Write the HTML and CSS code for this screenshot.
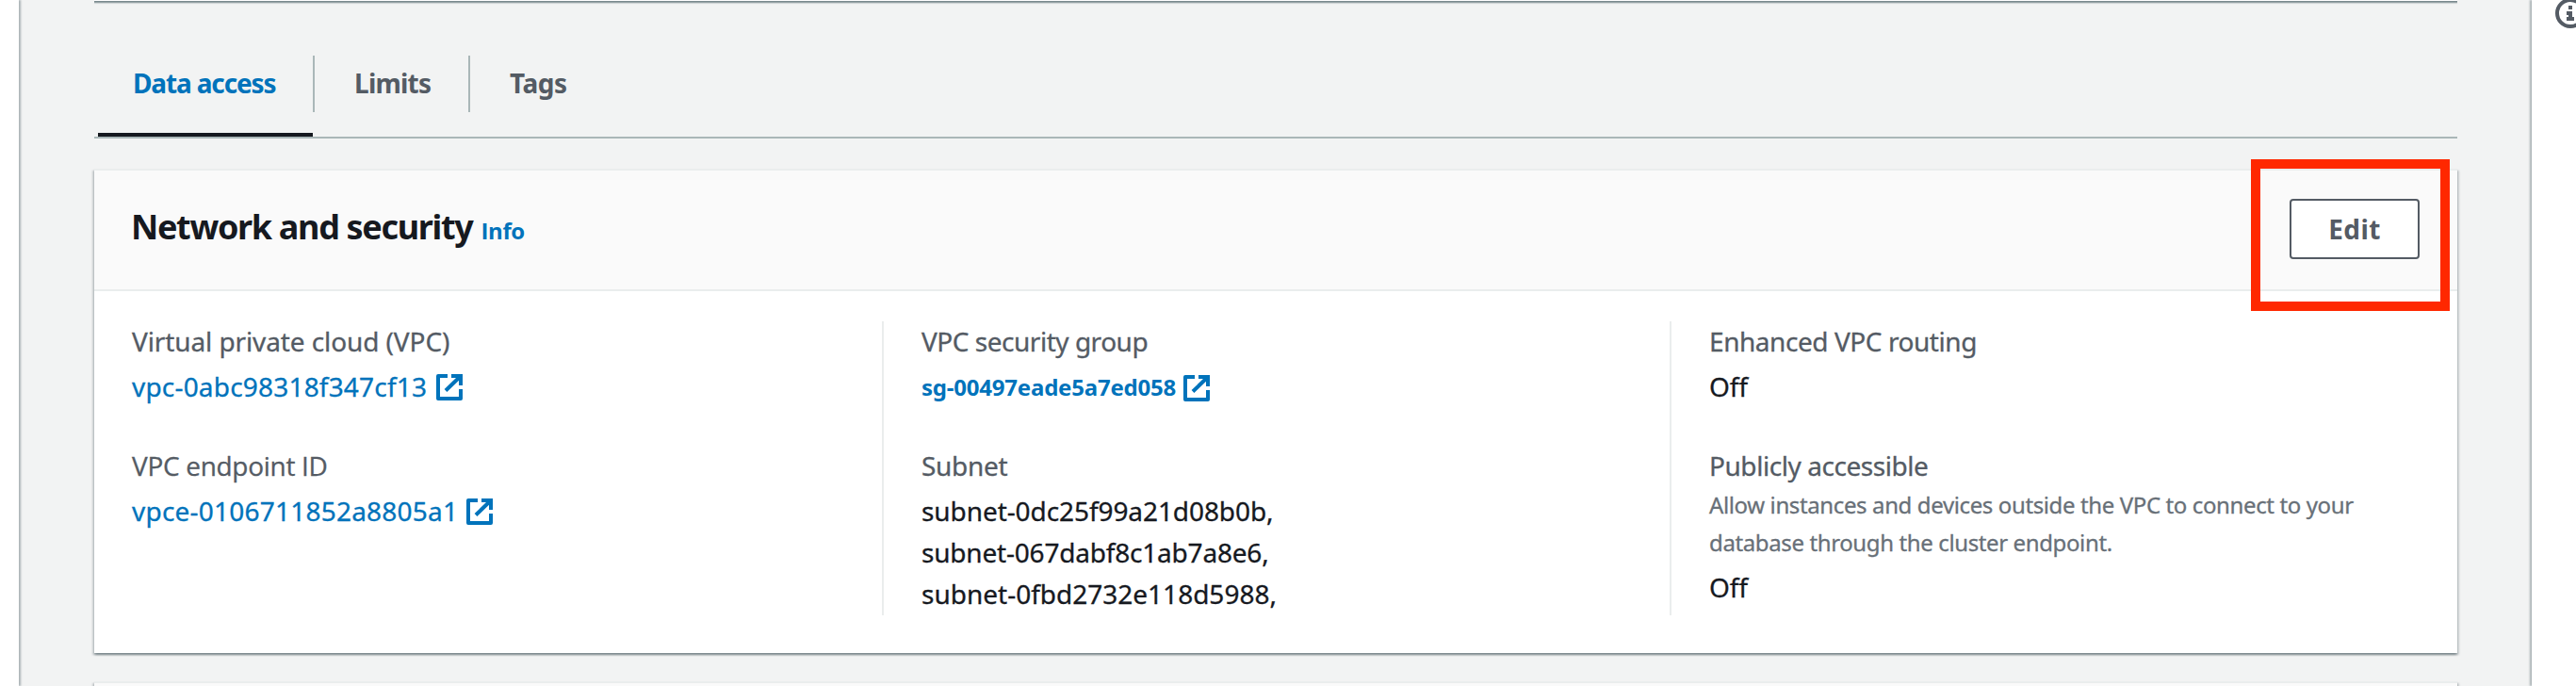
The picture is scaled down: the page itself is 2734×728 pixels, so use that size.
FILE: index.html
```
<!DOCTYPE html>
<html lang="en">
<head>
<meta charset="utf-8">
<title>Network and security</title>
<link rel="stylesheet" href="styles.css">
</head>
<body>
<svg class="defs" aria-hidden="true">
  <symbol id="external" viewBox="0 0 28 28">
    <path d="M12 2H2V26H26V16" fill="none" stroke="currentColor" stroke-width="4" stroke-linejoin="round"/>
    <path d="M16 2H26V12M25.500 2.500L10 17.500" fill="none" stroke="currentColor" stroke-width="4"/>
  </symbol>
</svg>
<div class="app">
  <aside class="nav"></aside>
  <main class="content">
    <section class="card card-prev"></section>
    <nav class="tabs">
      <a class="tab active"><span class="t-data">Data access</span></a>
      <a class="tab"><span class="t-limits">Limits</span></a>
      <a class="tab"><span class="t-tags">Tags</span></a>
    </nav>
    <section class="card">
      <header class="card-head">
        <h2>Network and security</h2>
        <a class="info">Info</a>
        <div class="action">
          <button class="btn">Edit</button>
          <span class="highlight"></span>
        </div>
      </header>
      <div class="cols">
        <div class="col">
          <div class="field">
            <div class="label s-virtual">Virtual private cloud (VPC)</div>
            <a class="value link s-vpc">vpc-0abc98318f347cf13<svg class="ext"><use href="#external"/></svg></a>
          </div>
          <div class="field">
            <div class="label plain-i">VPC endpoint ID</div>
            <a class="value link s-vpce">vpce-0106711852a8805a1<svg class="ext"><use href="#external"/></svg></a>
          </div>
        </div>
        <div class="col">
          <div class="field">
            <div class="label s-group">VPC security group</div>
            <a class="value link strong">sg-00497eade5a7ed058<svg class="ext"><use href="#external"/></svg></a>
          </div>
          <div class="field">
            <div class="label">Subnet</div>
            <div class="value">
              <div class="s-sub">subnet-0dc25f99a21d08b0b,</div>
              <div class="s-sub2">subnet-067dabf8c1ab7a8e6,</div>
              <div>subnet-0fbd2732e118d5988,</div>
            </div>
          </div>
        </div>
        <div class="col">
          <div class="field">
            <div class="label s-wide">Enhanced VPC routing</div>
            <div class="value">Off</div>
          </div>
          <div class="field">
            <div class="label s-wide">Publicly accessible</div>
            <p class="desc">Allow instances and devices outside the VPC to connect to your database through the cluster endpoint.</p>
            <div class="value">Off</div>
          </div>
        </div>
      </div>
    </section>
    <section class="card card-next"></section>
  </main>
  <aside class="help">
    <svg class="help-icon" viewBox="0 0 32 32">
      <circle cx="16" cy="16" r="14" fill="none" stroke="currentColor" stroke-width="4"/>
      <path d="M14 8h4v4h-4zM12 14h6v6h2v4h-8v-4h2v-2h-2z" fill="currentColor"/>
    </svg>
  </aside>
</div>
</body>
</html>
```
FILE: styles.css
```
* { box-sizing: border-box; }
body {
  margin: 0;
  background: #fff;
  color: #16191f;
  font: 28px/44px "Noto Sans", "Open Sans", sans-serif;
  overflow: hidden;
}
.defs { position: absolute; width: 0; height: 0; }
.app { display: flex; height: 728px; overflow: hidden; background: #f2f3f3; }
.nav {
  flex: none; width: 20px; background: #fff;
  box-shadow: 2px 0 2px rgba(0, 28, 36, .3);
}
.content {
  flex: 1; min-width: 0; height: 728px; overflow: hidden;
  padding: 0 79px 0 80px;
}
.help {
  flex: none; width: 47px; background: #fff; color: #545b64;
  box-shadow: -2px 0 2px rgba(0, 28, 36, .3);
  overflow: visible;
}
.help-icon { display: block; width: 32px; height: 32px; margin: -2px 0 0 25px; }

.card {
  background: #fff;
  border-top: 2px solid #eaeded;
  box-shadow: 0 2px 2px rgba(0, 28, 36, .3),
    2px 2px 2px rgba(0, 28, 36, .15),
    -2px 2px 2px rgba(0, 28, 36, .15);
}
.card-prev {
  height: 1px; border: 0;
  box-shadow: 0 1px #7a8a8e, 0 2px #97a3a6, 0 3px 1px #c9cfd0;
}
.card-next { height: 60px; margin-top: 30px; background: #fafafa; }

.tabs {
  display: flex; height: 146px; padding-left: 4px; margin-bottom: 32px;
  border-bottom: 2px solid #aab7b8;
}
.tab {
  display: flex; padding: 65px 40px 0 44px; height: 144px;
  color: #545b64; font-weight: 700;
  background: linear-gradient(#aab7b8, #aab7b8) right 58px / 2px 60px no-repeat;
}
.tab:first-child { width: 230px; padding-left: 37px; background-position-x: 228px; }
.tab:nth-child(2) { width: 165px; padding-left: 42px; }
.tab:last-child { padding-left: 42px; background: none; }
.tab.active {
  color: #0073bb;
  background-image: linear-gradient(#aab7b8, #aab7b8), linear-gradient(#16191f, #16191f);
  background-size: 2px 60px, 228px 4px;
  background-position: 228px 58px, 0 140px;
}
.tab span { white-space: nowrap; }
.t-data { letter-spacing: -1.15px; }
.t-limits { letter-spacing: -.77px; }
.t-tags { letter-spacing: -.46px; }

.card-head {
  display: flex; align-items: baseline; height: 128px;
  padding: 30px 40px 0; background: #fafafa;
  border-bottom: 2px solid #eaeded;
}
h2 {
  margin: 8px 9px 0 -1px; font-size: 36px; line-height: 44px;
  letter-spacing: -1.33px;
}
.info {
  color: #0073bb; font: 700 24px/44px "Open Sans", sans-serif;
  letter-spacing: -.4px;
}
.action { position: relative; align-self: flex-start; margin-left: auto; }
.btn {
  display: block; width: 138px; height: 64px; padding: 0;
  border: 2px solid #545b64; border-radius: 4px; background: #fff;
  color: #545b64; font: 700 28px/56px "Noto Sans", sans-serif;
  letter-spacing: .42px;
}
.highlight {
  position: absolute; left: -41px; top: -42px; width: 211px; height: 161px;
  border: 10px solid #ff2800;
}

.cols {
  display: grid; grid-template-columns: repeat(3, 1fr);
  padding: 32px 0 40px; height: 384px;
  -webkit-text-stroke: .3px currentColor;
}
.col {
  display: flex; flex-direction: column; gap: 40px;
  height: 312px; padding: 0 40px;
}
.col + .col { border-left: 2px solid #eaeded; }
.field:first-child { margin-top: -1px; }
.label { margin-bottom: 4px; color: #545b64; letter-spacing: -.3px; }
.plain-i { font-family: "Open Sans", sans-serif; }
.s-virtual { letter-spacing: -.1px; }
.s-group { letter-spacing: -.48px; }
.s-wide { letter-spacing: -.44px; }
.link { display: flex; height: 44px; color: #0073bb; }
.s-vpc { letter-spacing: .19px; }
.s-vpce { letter-spacing: .22px; }
.s-sub { letter-spacing: -.08px; }
.s-sub2 { letter-spacing: -.2px; }
.strong {
  font-size: 24px; font-weight: 700; line-height: 46px;
  letter-spacing: -.21px; -webkit-text-stroke: 0;
}
.ext { width: 28px; height: 28px; margin: 9px 0 0 10px; }
.strong .ext { margin-top: 10px; margin-left: 8px; }
.s-vpce .ext { margin-left: 9px; }
.desc {
  margin: -4px 0 5px; color: #687078; font-size: 24px; line-height: 40px;
  letter-spacing: -.38px;
}
```
